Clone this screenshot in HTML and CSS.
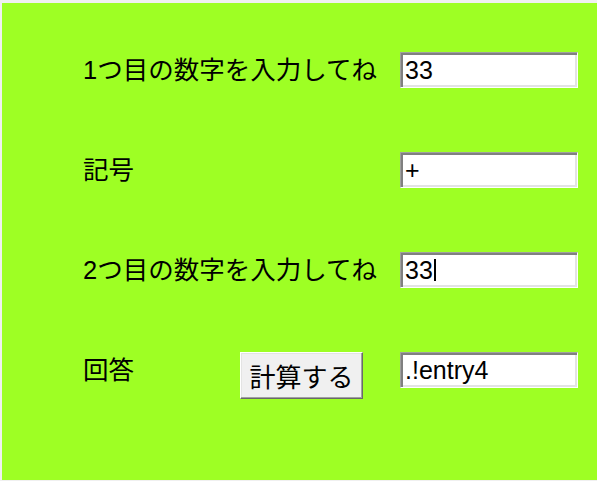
FILE: index.html
```html
<!DOCTYPE html>
<html lang="ja">
<head>
<meta charset="utf-8">
<title>計算</title>
<link rel="stylesheet" href="styles.css">
</head>
<body>
<div class="window">
  <div class="form">
    <div class="label wide">1つ目の数字を入力してね</div>
    <div class="entry"><span class="val">33</span></div>

    <div class="label wide">記号</div>
    <div class="entry"><span class="val">+</span></div>

    <div class="label wide">2つ目の数字を入力してね</div>
    <div class="entry"><span class="val">33</span><span class="caret"></span></div>

    <div class="label">回答</div>
    <div class="btn">計算する</div>
    <div class="entry"><span class="val">.!entry4</span></div>
  </div>
</div>
</body>
</html>
```

FILE: styles.css
```css
html, body {
  margin: 0;
  padding: 0;
  background: #f0f0f0;
}
body {
  padding: 3px 0 1px 2px;
  font-family: "Liberation Sans", "Noto Sans CJK JP", sans-serif;
  color: #000;
}
.window {
  width: 595px;
  height: 477px;
  background: #9eff24;
  box-sizing: border-box;
  padding: 49px 0 0 81px;
}
.form {
  display: grid;
  grid-template-columns: 157px 160px 178px;
  grid-template-rows: repeat(4, 36px);
  row-gap: 64px;
  align-items: start;
}
.label {
  font-size: 25.5px;
  line-height: 36px;
  height: 36px;
  white-space: nowrap;
}
.label.wide {
  grid-column: 1 / 3;
}
.entry {
  grid-column: 3;
  height: 36px;
  box-sizing: border-box;
  background: #fff;
  border: 1px solid;
  border-color: #a0a0a0 #ffffff #ffffff #a0a0a0;
  box-shadow: inset 2px 2px 0 #808080, inset -2px -2px 0 #e3e3e3;
  padding: 0 0 0 4px;
  display: flex;
  align-items: center;
  font-size: 25px;
}
.val {
  line-height: 30px;
  white-space: pre;
}
.caret {
  width: 2px;
  height: 22px;
  background: #000;
  margin-left: 1px;
}
.btn {
  grid-column: 2;
  justify-self: start;
  width: 123px;
  height: 47px;
  box-sizing: border-box;
  background: #f0f0f0;
  border: 1px solid;
  border-color: #ffffff #696969 #696969 #ffffff;
  box-shadow: inset -1px -1px 0 #a0a0a0, inset 1px 1px 0 #e3e3e3;
  display: flex;
  align-items: center;
  justify-content: center;
  font-family: "Noto Sans CJK JP", sans-serif;
  font-size: 26px;
  line-height: 1;
}
```
